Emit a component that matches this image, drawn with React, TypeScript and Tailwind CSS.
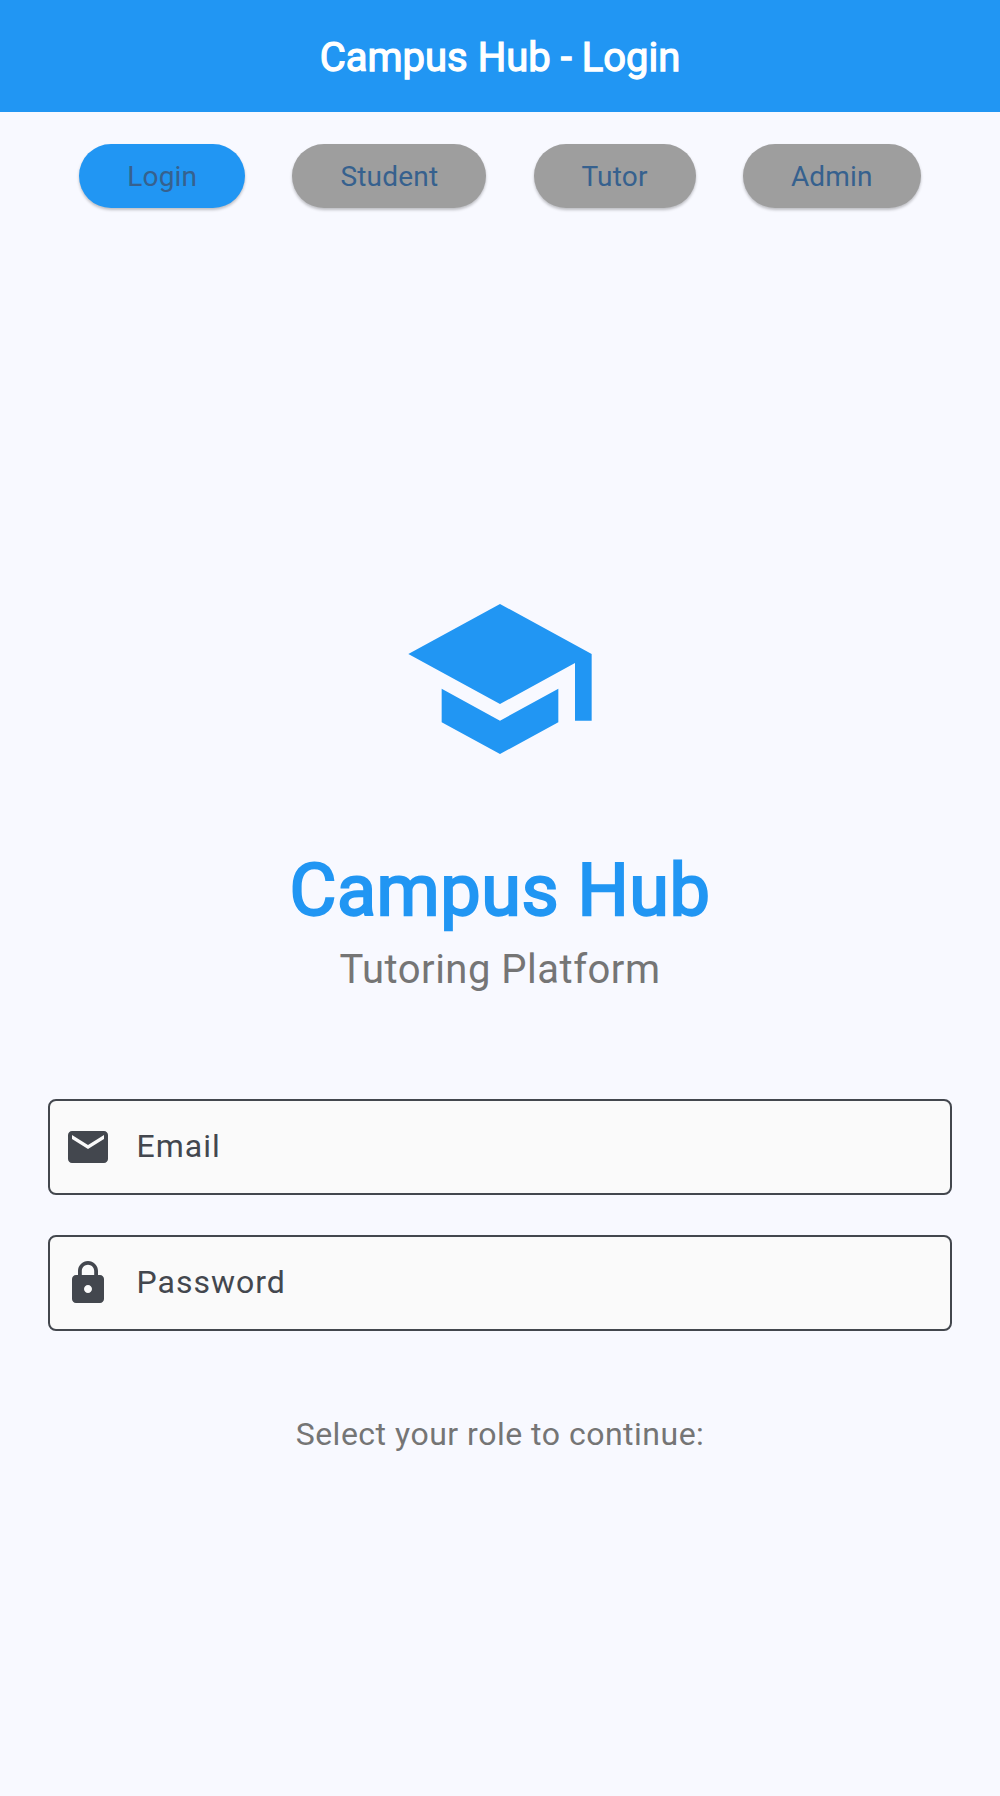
import type { ReactNode } from "react";

const tabs = ["Login", "Student", "Tutor", "Admin"];

function Field({ label, type, icon }: { label: string; type: string; icon: ReactNode }) {
  return (
    <label className="flex h-24 w-full items-center rounded-lg border-2 border-[#43474e] bg-[#fafafa] pl-3.5 text-[#43474e]">
      <svg viewBox="0 0 24 24" className="size-12 shrink-0" fill="currentColor">
        {icon}
      </svg>
      <span className="ml-[24.5px] pb-0.5 text-[32px] leading-12 tracking-[1px]">{label}</span>
      <input type={type} aria-label={label} className="h-full min-w-0 flex-1 bg-transparent px-4 text-[32px] outline-none" />
    </label>
  );
}

export default function App() {
  return (
    <div className="flex h-[1796px] w-full flex-col bg-[#f8f9ff] font-['Roboto',sans-serif] font-normal antialiased">
      <header className="flex h-28 items-center justify-center bg-[#2196f3] pt-1">
        <h1 className="text-[40px] leading-[50px] text-white [-webkit-text-stroke:1.25px_#fff]">Campus Hub - Login</h1>
      </header>

      <nav className="flex justify-evenly px-8 pt-8">
        {tabs.map((tab, i) => (
          <button
            key={tab}
            className={`h-16 rounded-full px-12 pt-0.5 text-[28px] leading-10 tracking-[0.2px] text-[#36618e] shadow-[0_2px_3px_rgba(0,0,0,0.24)] ${
              i === 0 ? "bg-[#2196f3]" : "bg-[#9e9e9e]"
            }`}
          >
            {tab}
          </button>
        ))}
      </nav>

      <main className="mt-[371px] flex flex-col items-center px-12">
        <svg viewBox="0 0 24 24" className="size-[200px]" fill="#2196f3">
          <path d="M5 13.18v4L12 21l7-3.82v-4L12 17l-7-3.82zM12 3L1 9l11 6 9-4.91V17h2V9L12 3z" />
        </svg>
        <h2 className="mt-[60px] text-[72px] leading-[103px] tracking-[0.5px] text-[#2196f3] [-webkit-text-stroke:2.25px_#2196f3]">
          Campus Hub
        </h2>
        <p className="-mt-px text-[40px] leading-[57px] tracking-[0.5px] text-[#757575]">Tutoring Platform</p>

        <form className="mt-[101px] flex w-full flex-col gap-10">
          <Field
            label="Email"
            type="email"
            icon={<path d="M20 4H4c-1.1 0-1.99.9-1.99 2L2 18c0 1.1.9 2 2 2h16c1.1 0 2-.9 2-2V6c0-1.1-.9-2-2-2zm0 4l-8 5-8-5V6l8 5 8-5v2z" />}
          />
          <Field
            label="Password"
            type="password"
            icon={<path d="M18 8h-1V6c0-2.76-2.24-5-5-5S7 3.24 7 6v2H6c-1.1 0-2 .9-2 2v10c0 1.1.9 2 2 2h12c1.1 0 2-.9 2-2V10c0-1.1-.9-2-2-2zm-6 9c-1.1 0-2-.9-2-2s.9-2 2-2 2 .9 2 2-.9 2-2 2zm3.1-9H8.9V6c0-1.71 1.39-3.1 3.1-3.1 1.71 0 3.1 1.39 3.1 3.1v2z" />}
          />
        </form>

        <p className="mt-20 text-[32px] leading-[46px] tracking-[0.5px] text-[#757575]">Select your role to continue:</p>
      </main>
    </div>
  );
}
